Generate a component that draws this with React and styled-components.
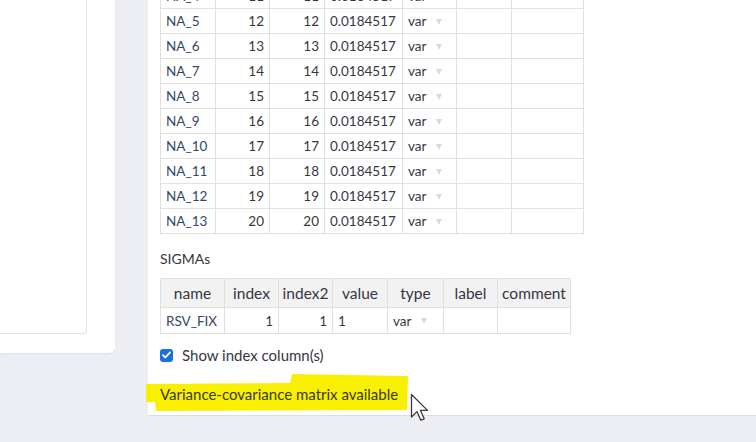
import React from "react";
import styled, { createGlobalStyle } from "styled-components";

const Global = createGlobalStyle`
  html, body { margin: 0; padding: 0; background: #eceef4; }
  body { font-family: Lato, "Noto Sans", sans-serif; color: #31333f; }
`;

const Page = styled.div`
  width: 756px;
  height: 442px;
  overflow: hidden;
  display: flex;
  align-items: flex-start;
  background: #eceef4;
`;

const Sidebar = styled.aside`
  flex: none;
  width: 115px;
  height: 353px;
  background: #fff;
  border-bottom-right-radius: 6px;
  box-shadow: 0 1px 2px rgba(0, 0, 0, 0.06);
`;

const SideInner = styled.div`
  width: 86px;
  height: 333px;
  border-right: 1px solid #dfe1e6;
  border-bottom: 1px solid #dfe1e6;
  border-bottom-right-radius: 4px;
`;

const Main = styled.main`
  flex: 1;
  margin-left: 33px;
  margin-right: -20px;
  height: 415px;
  background: #fff;
  border-bottom: 1px solid #d9dce4;
  padding-left: 12px;
  display: flex;
  flex-direction: column;
  align-items: flex-start;
`;

const Grid = styled.table`
  border-collapse: collapse;
  table-layout: fixed;
  margin-top: ${(p) => p.$top || 0}px;
  font-size: 13.5px;
  border: 1px solid #dcdcdc;
`;

const Row = styled.tr`
  height: ${(p) => p.$h}px;
`;

const Cell = styled.td`
  border: 1px solid #e0e0e0;
  padding: 0 5px;
  white-space: nowrap;
  overflow: hidden;
  text-align: ${(p) => p.$align || "left"};
  color: ${(p) => (p.$name ? "#33476a" : "#35373f")};
  vertical-align: middle;
  line-height: 16px;
`;

const Head = styled.th`
  border: 1px solid #e0e0e0;
  background: #f2f2f3;
  font-weight: 400;
  font-size: 15.5px;
  padding: 0 2px;
  text-align: center;
  color: #35373f;
  white-space: nowrap;
`;

const TypeWrap = styled.div`
  display: flex;
  align-items: center;
  gap: 10px;
`;

const Caret = styled.span`
  width: 0;
  height: 0;
  border-left: 3.5px solid transparent;
  border-right: 3.5px solid transparent;
  border-top: 6px solid #dadada;
  margin-top: 1px;
`;

const Label = styled.div`
  margin-top: 15px;
  font-size: 14px;
  line-height: 20px;
  color: #35373f;
`;

const CheckRow = styled.label`
  margin-top: 11px;
  display: flex;
  align-items: center;
  gap: 9px;
  font-size: 15px;
  line-height: 20px;
  color: #35373f;
`;

const Box = styled.span`
  width: 13px;
  height: 13px;
  border-radius: 3px;
  background: #1c6fe0;
  display: flex;
  align-items: center;
  justify-content: center;
`;

const Highlight = styled.div`
  position: relative;
  margin-top: 18px;
  font-size: 15px;
  line-height: 22px;
  color: #3a3a1c;
  &::before {
    content: "";
    position: absolute;
    left: -14px;
    top: -9px;
    width: 262px;
    height: 38px;
    background: #f9ef00;
    clip-path: polygon(0px 10px, 144px 9px, 146px 0px, 262px 2px, 261px 36px, 10px 37px, 9px 28px, 0px 28px);
  }
`;

const HighlightText = styled.span`
  position: relative;
`;

const Pointer = styled.svg`
  position: absolute;
  left: 250px;
  top: 10px;
`;

const cols1 = [55, 54, 55, 78, 54, 55, 72];
const cols2 = [64, 54, 54, 55, 56, 54, 73];

const rows = Array.from({ length: 10 }, (_, i) => ({ name: `NA_${i + 4}`, idx: i + 11 }));

function TypeCell() {
  return (
    <Cell>
      <TypeWrap>
        <span>var</span>
        <Caret />
      </TypeWrap>
    </Cell>
  );
}

export default function App() {
  return (
    <>
      <Global />
      <Page>
        <Sidebar>
          <SideInner />
        </Sidebar>
        <Main>
          <Grid $top={-17}>
            <colgroup>
              {cols1.map((w, i) => (
                <col key={i} style={{ width: w }} />
              ))}
            </colgroup>
            <tbody>
              {rows.map((r) => (
                <Row $h={25} key={r.name}>
                  <Cell $name>{r.name}</Cell>
                  <Cell $align="right">{r.idx}</Cell>
                  <Cell $align="right">{r.idx}</Cell>
                  <Cell>0.0184517</Cell>
                  <TypeCell />
                  <Cell />
                  <Cell />
                </Row>
              ))}
            </tbody>
          </Grid>
          <Label>SIGMAs</Label>
          <Grid $top={9}>
            <colgroup>
              {cols2.map((w, i) => (
                <col key={i} style={{ width: w }} />
              ))}
            </colgroup>
            <thead>
              <Row $h={29}>
                <Head>name</Head>
                <Head>index</Head>
                <Head>index2</Head>
                <Head>value</Head>
                <Head>type</Head>
                <Head>label</Head>
                <Head>comment</Head>
              </Row>
            </thead>
            <tbody>
              <Row $h={26}>
                <Cell $name>RSV_FIX</Cell>
                <Cell $align="right">1</Cell>
                <Cell $align="right">1</Cell>
                <Cell>1</Cell>
                <TypeCell />
                <Cell />
                <Cell />
              </Row>
            </tbody>
          </Grid>
          <CheckRow>
            <Box>
              <svg width="9" height="8" viewBox="0 0 9 8">
                <path d="M1 4.2 L3.4 6.5 L8 1.4" fill="none" stroke="#fff" strokeWidth="1.8" strokeLinecap="round" strokeLinejoin="round" />
              </svg>
            </Box>
            Show index column(s)
          </CheckRow>
          <Highlight>
            <HighlightText>Variance-covariance matrix available</HighlightText>
            <Pointer width="20" height="30" viewBox="0 0 20 30">
              <path
                d="M1.5 1.5 L1.5 24 L7 18.6 L10.8 27.2 L14.2 25.8 L10.5 17.4 L17.5 17.4 Z"
                fill="#fff"
                stroke="#3a3a3a"
                strokeWidth="1.3"
                strokeLinejoin="round"
              />
            </Pointer>
          </Highlight>
        </Main>
      </Page>
    </>
  );
}
